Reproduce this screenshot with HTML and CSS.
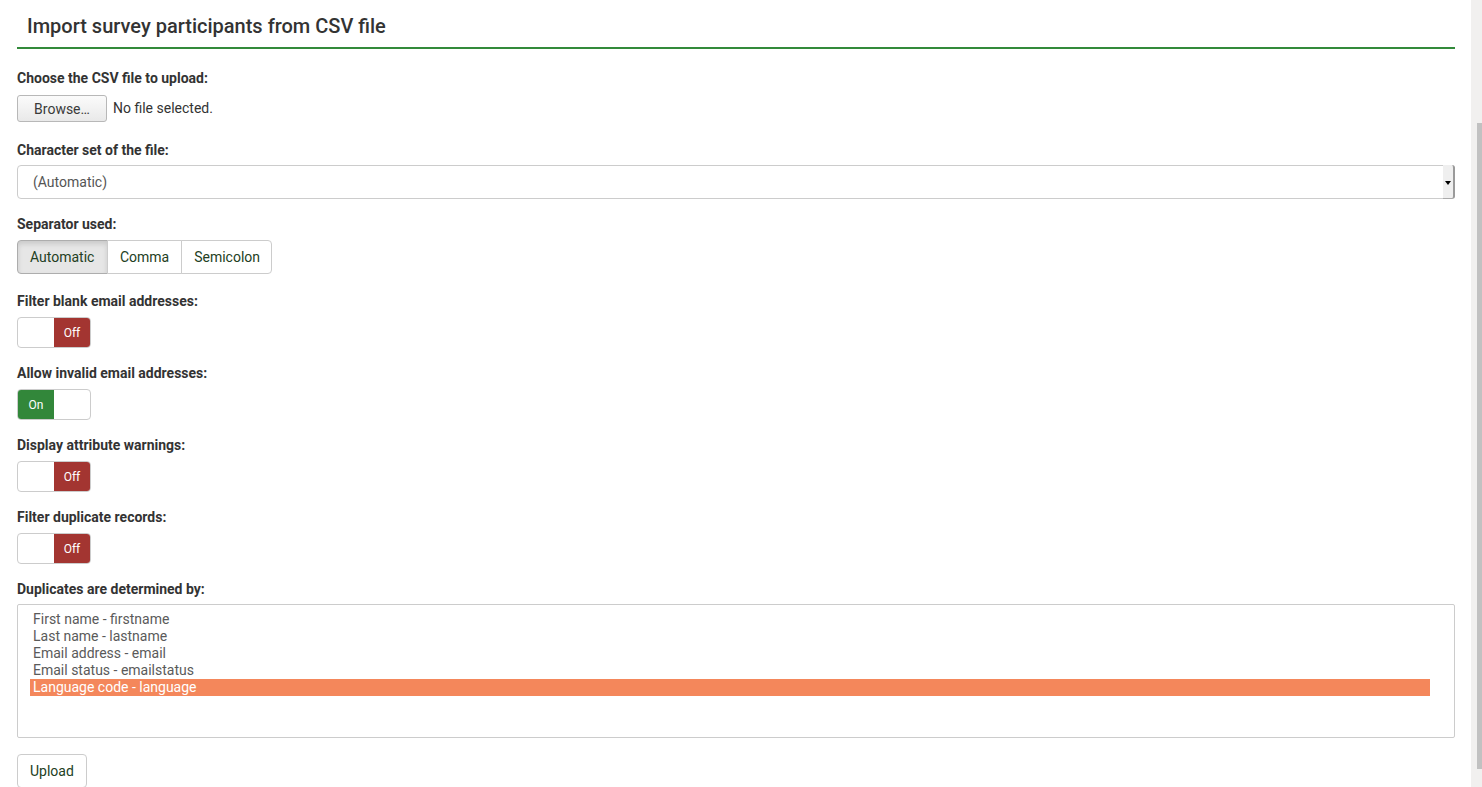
FILE: index.html
```html
<!DOCTYPE html>
<html>
<head>
<meta charset="utf-8">
<link rel="stylesheet" href="styles.css">
<title>Import survey participants</title>
</head>
<body>
<div class="page">
  <main class="content">
    <h3 class="title">Import survey participants from CSV file</h3>
    <div class="group group-file">
      <div class="label">Choose the CSV file to upload:</div>
      <div class="file-row">
        <span class="browse">Browse…</span>
        <span class="nofile">No file selected.</span>
      </div>
    </div>
    <div class="group">
      <div class="label">Character set of the file:</div>
      <div class="select">
        <span class="select-text">(Automatic)</span>
        <span class="select-arrow"><span class="tri"></span></span>
      </div>
    </div>
    <div class="group group-sep">
      <div class="label">Separator used:</div>
      <div class="btn-group">
        <span class="seg active">Automatic</span>
        <span class="seg">Comma</span>
        <span class="seg">Semicolon</span>
      </div>
    </div>
    <div class="group">
      <div class="label">Filter blank email addresses:</div>
      <div class="toggle"><span class="half"></span><span class="half off">Off</span></div>
    </div>
    <div class="group">
      <div class="label">Allow invalid email addresses:</div>
      <div class="toggle"><span class="half on">On</span><span class="half"></span></div>
    </div>
    <div class="group">
      <div class="label">Display attribute warnings:</div>
      <div class="toggle"><span class="half"></span><span class="half off">Off</span></div>
    </div>
    <div class="group">
      <div class="label">Filter duplicate records:</div>
      <div class="toggle"><span class="half"></span><span class="half off">Off</span></div>
    </div>
    <div class="group group-list">
      <div class="label label-list">Duplicates are determined by:</div>
      <div class="listbox">
        <div class="opt">First name - firstname</div>
        <div class="opt">Last name - lastname</div>
        <div class="opt">Email address - email</div>
        <div class="opt">Email status - emailstatus</div>
        <div class="opt selected">Language code - language</div>
      </div>
    </div>
    <div class="group">
      <span class="upload">Upload</span>
    </div>
  </main>
  <div class="scrollbar"><div class="thumb"></div></div>
</div>
</body>
</html>
```
FILE: styles.css
```css
html, body {
  margin: 0;
  padding: 0;
  height: 787px;
  overflow: hidden;
  background: #fff;
}
body {
  font-family: Roboto, "Liberation Sans", sans-serif;
  font-size: 14px;
  line-height: 20px;
  color: #333;
}
.page {
  display: flex;
  height: 787px;
}
.content {
  flex: 1;
  padding: 0 16px 0 17px;
  min-width: 0;
}
.scrollbar {
  width: 11px;
  flex: none;
  background: #f1f0ef;
  display: flex;
  flex-direction: column;
  align-items: flex-end;
}
.thumb {
  margin-top: 123px;
  width: 5px;
  height: 646px;
  background: #c1c1c1;
}
.title {
  margin: 0 0 19px 0;
  padding: 14px 10px 9px 10px;
  font-size: 20px;
  line-height: 24px;
  font-weight: 500;
  color: #333;
  border-bottom: 2px solid #328a3a;
}
.group {
  margin-bottom: 15px;
}
.group-file,
.group-list {
  margin-bottom: 16px;
}
.group-sep {
  margin-bottom: 17px;
}
.label {
  font-weight: 700;
  margin-bottom: 6px;
  color: #333;
}
.label-list {
  margin-bottom: 5px;
}
.file-row {
  display: flex;
  align-items: flex-start;
  height: 30px;
}
.browse {
  box-sizing: border-box;
  width: 90px;
  height: 27px;
  margin-top: 1px;
  border: 1px solid #b8b8b8;
  border-radius: 3px;
  background: linear-gradient(#fbfbfb, #e9e9e9);
  display: flex;
  align-items: center;
  justify-content: center;
  color: #3a3a3a;
  font-size: 14px;
}
.nofile {
  margin-left: 6px;
  margin-top: 4px;
  color: #333;
}
.select {
  box-sizing: border-box;
  height: 34px;
  margin-top: -1px;
  border: 1px solid #ccc;
  border-radius: 4px;
  display: flex;
  align-items: stretch;
}
.select-text {
  flex: 1;
  padding-left: 15px;
  display: flex;
  align-items: center;
  color: #555;
}
.select-arrow {
  width: 10px;
  background: #efefef;
  border-right: 2px solid #9a9a9a;
  border-bottom: 1px solid #aaa;
  border-radius: 0 3px 3px 0;
  display: flex;
  align-items: center;
  justify-content: center;
  margin: -1px -1px -1px 0;
}
.tri {
  width: 0;
  height: 0;
  border-left: 3px solid transparent;
  border-right: 3px solid transparent;
  border-top: 4px solid #000;
  margin-top: 2px;
}
.btn-group {
  display: inline-flex;
  height: 34px;
  box-sizing: border-box;
}
.seg {
  box-sizing: border-box;
  height: 34px;
  padding: 0 12px;
  display: flex;
  align-items: center;
  border: 1px solid #ccc;
  margin-left: -1px;
  background: #fff;
  color: #233e23;
}
.seg:first-child {
  margin-left: 0;
  padding-right: 12.5px;
  border-radius: 4px 0 0 4px;
}
.seg:last-child {
  padding-right: 11px;
  border-radius: 0 4px 4px 0;
}
.seg.active {
  background: #e6e6e6;
  border-color: #adadad;
  box-shadow: inset 0 3px 5px rgba(0,0,0,0.125);
}
.toggle {
  box-sizing: border-box;
  width: 74px;
  height: 31px;
  border: 1px solid #ccc;
  border-radius: 4px;
  display: flex;
  overflow: hidden;
}
.half {
  flex: 1;
  display: flex;
  align-items: center;
  justify-content: center;
  font-size: 12px;
  color: #fff;
}
.half.off {
  background: #a33531;
}
.half.on {
  background: #32873a;
}
.listbox {
  box-sizing: border-box;
  height: 134px;
  border: 1px solid #ccc;
  border-radius: 2px;
  padding: 6px 24px 6px 12px;
  color: #5a5a5a;
}
.opt {
  line-height: 17px;
  padding-left: 3px;
}
.opt.selected {
  background: #f4875b;
  color: #fff;
}
.upload {
  box-sizing: border-box;
  display: inline-flex;
  align-items: center;
  height: 34px;
  padding: 0 12px;
  border: 1px solid #ccc;
  border-radius: 4px;
  color: #233e23;
  background: #fff;
}
```
